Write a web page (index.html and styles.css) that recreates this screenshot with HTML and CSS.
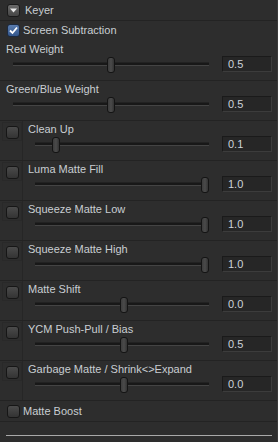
FILE: index.html
```html
<!DOCTYPE html>
<html>
<head>
<meta charset="utf-8">
<link rel="stylesheet" href="styles.css">
</head>
<body>
<div class="panel">
  <div class="header">
    <span class="tog"><svg width="7" height="5" viewBox="0 0 7 5"><path d="M0 0.5H7L3.5 4.5Z" fill="#e8e8e8"/></svg></span>
    <span class="title">Keyer</span>
  </div>
  <div class="check-row top">
    <span class="cb on"><svg width="11" height="11" viewBox="0 0 11 11"><path d="M2 5.5L4.5 8L9 2.5" fill="none" stroke="#fff" stroke-width="1.8"/></svg></span>
    <span class="text">Screen Subtraction</span>
  </div>
  <div class="row plain first">
    <div class="body">
      <div class="label">Red Weight</div>
      <div class="ctl"><div class="track"><span class="knob" style="--v:0.5"></span></div><div class="val">0.5</div></div>
    </div>
  </div>
  <div class="row plain">
    <div class="body">
      <div class="label">Green/Blue Weight</div>
      <div class="ctl"><div class="track"><span class="knob" style="--v:0.5"></span></div><div class="val">0.5</div></div>
    </div>
  </div>
  <div class="row">
    <div class="cb-col"><div class="cb-cell"><span class="cb"></span></div></div>
    <div class="body">
      <div class="label">Clean Up</div>
      <div class="ctl"><div class="track"><span class="knob" style="--v:0.1"></span></div><div class="val">0.1</div></div>
    </div>
  </div>
  <div class="row">
    <div class="cb-col"><div class="cb-cell"><span class="cb"></span></div></div>
    <div class="body">
      <div class="label">Luma Matte Fill</div>
      <div class="ctl"><div class="track"><span class="knob" style="--v:1"></span></div><div class="val">1.0</div></div>
    </div>
  </div>
  <div class="row">
    <div class="cb-col"><div class="cb-cell"><span class="cb"></span></div></div>
    <div class="body">
      <div class="label">Squeeze Matte Low</div>
      <div class="ctl"><div class="track"><span class="knob" style="--v:1"></span></div><div class="val">1.0</div></div>
    </div>
  </div>
  <div class="row">
    <div class="cb-col"><div class="cb-cell"><span class="cb"></span></div></div>
    <div class="body">
      <div class="label">Squeeze Matte High</div>
      <div class="ctl"><div class="track"><span class="knob" style="--v:1"></span></div><div class="val">1.0</div></div>
    </div>
  </div>
  <div class="row">
    <div class="cb-col"><div class="cb-cell"><span class="cb"></span></div></div>
    <div class="body">
      <div class="label">Matte Shift</div>
      <div class="ctl"><div class="track"><span class="knob" style="--v:0.51"></span></div><div class="val">0.0</div></div>
    </div>
  </div>
  <div class="row">
    <div class="cb-col"><div class="cb-cell"><span class="cb"></span></div></div>
    <div class="body">
      <div class="label">YCM Push-Pull / Bias</div>
      <div class="ctl"><div class="track"><span class="knob" style="--v:0.51"></span></div><div class="val">0.5</div></div>
    </div>
  </div>
  <div class="row">
    <div class="cb-col"><div class="cb-cell"><span class="cb"></span></div></div>
    <div class="body">
      <div class="label">Garbage Matte / Shrink&lt;&gt;Expand</div>
      <div class="ctl"><div class="track"><span class="knob" style="--v:0.51"></span></div><div class="val">0.0</div></div>
    </div>
  </div>
  <div class="check-row boost">
    <span class="cb"></span>
    <span class="text">Matte Boost</span>
  </div>
  <div class="footer"><div class="line"></div></div>
</div>
</body>
</html>
```

FILE: styles.css
```css
html, body {
  margin: 0;
  padding: 0;
  background: #2d2d2d;
}
body {
  width: 278px;
  height: 442px;
  overflow: hidden;
  font-family: "Liberation Sans", Arial, sans-serif;
  font-size: 11px;
  color: #c9cdd2;
}
.panel {
  width: 278px;
  height: 442px;
  box-sizing: border-box;
  border-right: 1px solid #3a3a3a;
}
.header {
  height: 20px;
  border-bottom: 1px solid #232323;
  display: flex;
  align-items: center;
  padding-left: 7px;
  gap: 5px;
}
.tog {
  width: 13px;
  height: 13px;
  box-sizing: border-box;
  border: 1px solid #1a1a1a;
  border-radius: 3px;
  background: linear-gradient(#6a6a6a, #454545);
  display: flex;
  align-items: center;
  justify-content: center;
}
.title { line-height: 13px; }
.check-row {
  display: flex;
  align-items: center;
  padding-left: 7px;
  gap: 3px;
  box-sizing: border-box;
}
.check-row.top { height: 19px; }
.check-row.boost {
  height: 22px;
  border-top: 1px solid #232323;
  border-bottom: 1px solid #232323;
}
.check-row .text { line-height: 13px; }
.cb {
  width: 13px;
  height: 13px;
  box-sizing: border-box;
  border: 1px solid #161616;
  border-radius: 3px;
  background: linear-gradient(#4b4b4b, #333333);
  display: flex;
  align-items: center;
  justify-content: center;
  flex: none;
}
.cb.on {
  background: linear-gradient(#5a7cae, #33578d);
  border-color: #1c2a40;
}
.row {
  height: 40px;
  box-sizing: border-box;
  border-top: 1px solid #232323;
  display: flex;
}
.row.first { border-top-color: transparent; }
.cb-col {
  width: 22px;
  flex: none;
  border-right: 1px solid #262626;
}
.cb-cell {
  margin: 1px 0 0 2px;
  width: 20px;
  height: 19px;
  box-sizing: border-box;
  border: 1px solid #292929;
  padding: 3px 0 0 3px;
}
.body {
  flex: 1;
  min-width: 0;
  padding: 2px 5px 0 5px;
}
.row.plain .body { padding-left: 6px; }
.label {
  line-height: 13px;
  white-space: nowrap;
}
.ctl {
  height: 16px;
  display: flex;
  align-items: center;
  padding-left: 7px;
}
.track {
  flex: 1;
  height: 4px;
  box-sizing: border-box;
  background: #181818;
  border-top: 1px solid #222;
  border-bottom: 1px solid #444;
  position: relative;
  margin-right: 13px;
}
.knob {
  position: absolute;
  top: -6px;
  left: calc(var(--v) * (100% - 8px));
  width: 8px;
  height: 16px;
  box-sizing: border-box;
  border: 1px solid #141414;
  border-radius: 3px;
  background: linear-gradient(90deg, #3c3c3c, #4a4a4a 50%, #333 100%);
}
.val {
  width: 50px;
  height: 16px;
  box-sizing: border-box;
  flex: none;
  background: #262626;
  border: 1px solid #3c3c3c;
  border-top-color: #1a1a1a;
  border-left-color: #1a1a1a;
  padding-left: 5px;
  line-height: 14px;
  color: #cdd3da;
}
.footer {
  padding: 13px 5px 0 6px;
}
.line {
  height: 1px;
  background: #a9a9a9;
}
```
